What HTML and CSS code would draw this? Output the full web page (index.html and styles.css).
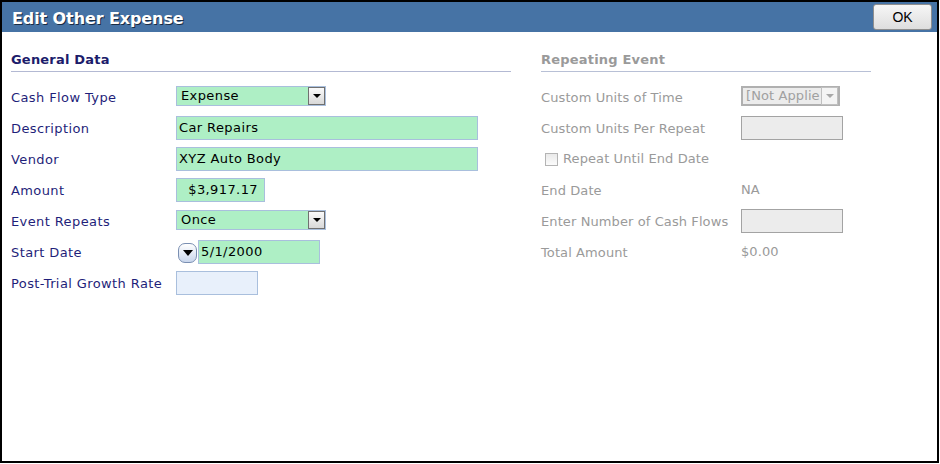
FILE: index.html
```html
<!DOCTYPE html>
<html>
<head>
<meta charset="utf-8">
<link rel="stylesheet" href="styles.css">
</head>
<body>
<div class="dialog">
  <div class="titlebar">
    <span class="title">Edit Other Expense</span>
    <button class="ok">OK</button>
  </div>
  <div class="content">
    <div class="col left">
      <div class="heading">General Data</div>
      <div class="row">
        <div class="label">Cash Flow Type</div>
        <div class="select green w150"><span class="val">Expense</span><span class="drop"><span class="tri"></span></span></div>
      </div>
      <div class="row">
        <div class="label">Description</div>
        <div class="input green w302">Car Repairs</div>
      </div>
      <div class="row">
        <div class="label">Vendor</div>
        <div class="input green w302">XYZ Auto Body</div>
      </div>
      <div class="row">
        <div class="label">Amount</div>
        <div class="input green w89 right">$3,917.17</div>
      </div>
      <div class="row">
        <div class="label">Event Repeats</div>
        <div class="select green w150"><span class="val">Once</span><span class="drop"><span class="tri"></span></span></div>
      </div>
      <div class="row">
        <div class="label">Start Date</div>
        <div class="datewrap">
          <span class="datebtn"><span class="tri"></span></span>
          <div class="input green w122 tight">5/1/2000</div>
        </div>
      </div>
      <div class="row">
        <div class="label">Post-Trial Growth Rate</div>
        <div class="input blue w82"></div>
      </div>
    </div>
    <div class="col right-col">
      <div class="heading gray">Repeating Event</div>
      <div class="row">
        <div class="label gray wide">Custom Units of Time</div>
        <div class="select disabled w99"><span class="val">[Not Applie</span><span class="drop dis"><span class="tri"></span></span></div>
      </div>
      <div class="row">
        <div class="label gray wide">Custom Units Per Repeat</div>
        <div class="input disabled w102"></div>
      </div>
      <div class="row">
        <label class="check gray"><span class="box"></span>Repeat Until End Date</label>
      </div>
      <div class="row">
        <div class="label gray wide">End Date</div>
        <div class="value gray">NA</div>
      </div>
      <div class="row">
        <div class="label gray wide">Enter Number of Cash Flows</div>
        <div class="input disabled w102"></div>
      </div>
      <div class="row">
        <div class="label gray wide">Total Amount</div>
        <div class="value gray">$0.00</div>
      </div>
    </div>
  </div>
</div>
</body>
</html>
```
FILE: styles.css
```css
html, body {
  margin: 0;
  padding: 0;
  background: #fff;
}
body {
  font-family: "DejaVu Sans", Verdana, sans-serif;
  font-size: 13px;
}
.dialog {
  width: 935px;
  height: 459px;
  border: 2px solid #000;
  background: #fff;
}
.titlebar {
  height: 30px;
  background: #4673a5;
  display: flex;
  align-items: center;
  justify-content: space-between;
  padding: 0 5px 0 10px;
}
.title {
  color: #fff;
  font-weight: bold;
  font-size: 16px;
  text-shadow: 1px 1px 0 #1a2c44;
  letter-spacing: -0.1px;
  margin-top: 2px;
}
.ok {
  width: 59px;
  height: 26px;
  border: 1px solid #8e8e8e;
  border-radius: 3px;
  background: linear-gradient(#f6f6f6, #dedede);
  font-family: "Liberation Sans", Arial, sans-serif;
  font-size: 14px;
  color: #000;
  padding: 0;
}
.content {
  display: flex;
  padding: 18px 0 0 9px;
}
.col.left {
  width: 500px;
  letter-spacing: 0.4px;
}
.col.right-col {
  width: 330px;
  margin-left: 30px;
  letter-spacing: 0.1px;
}
.heading {
  font-weight: bold;
  font-size: 13px;
  letter-spacing: 0.2px;
  color: #1c1c6b;
  height: 20px;
  padding-top: 1px;
  border-bottom: 1px solid #b3b9d3;
  line-height: 18px;
  margin-bottom: 9px;
}
.heading.gray {
  color: #9a9a9a;
  border-bottom-color: #b8c0d6;
}
.row {
  height: 31px;
  display: flex;
  align-items: center;
}
.label {
  width: 165px;
  color: #1f1f7a;
  flex: none;
  padding-top: 1px;
}
.label.wide {
  width: 200px;
}
.gray {
  color: #9a9a9a;
}
.input {
  box-sizing: border-box;
  height: 24px;
  border: 1px solid #a9bfdd;
  padding: 0 2px;
  line-height: 22px;
  color: #000;
}
.green {
  background: #aeefc5;
}
.blue {
  background: #e8f0fb;
}
.right {
  text-align: right;
  padding-right: 6px;
}
.w302 { width: 302px; }
.w150 { width: 150px; }
.w89 { width: 89px; }
.w82 { width: 82px; }
.w122 { width: 122px; }
.w99 { width: 99px; }
.w102 { width: 102px; }
.select {
  box-sizing: border-box;
  height: 20px;
  border: 1px solid #a9bfdd;
  display: flex;
  align-items: center;
  justify-content: space-between;
  padding-left: 4px;
  color: #000;
  margin-top: -1px;
}
.select .val {
  line-height: 18px;
}
.drop {
  box-sizing: border-box;
  width: 17px;
  height: 18px;
  border: 1px solid #707070;
  background: linear-gradient(#fafafa, #d8d8d8);
  display: flex;
  align-items: center;
  justify-content: center;
}
.tri {
  width: 0;
  height: 0;
  border-left: 4px solid transparent;
  border-right: 4px solid transparent;
  border-top: 4px solid #000;
}
.drop.dis {
  border-color: #c0c0c0;
  background: #f4f4f4;
}
.drop.dis .tri {
  border-top-color: #a8a8a8;
}
.select.disabled {
  background: #ececec;
  border: 2px solid #b0b0b0;
  color: #a0a0a0;
  padding-left: 3px;
}
.input.disabled {
  background: #ececec;
  border: 1px solid #a3a3a3;
}
.datewrap {
  display: flex;
  align-items: center;
}
.datebtn {
  box-sizing: border-box;
  width: 19px;
  height: 20px;
  border: 1px solid #7a8fb2;
  border-radius: 7px;
  background: linear-gradient(#ffffff, #c9d6ec);
  display: flex;
  align-items: center;
  justify-content: center;
  margin: 2px 1px 0 2px;
}
.datebtn .tri {
  border-left-width: 5px;
  border-right-width: 5px;
  border-top-width: 6px;
  margin-top: 1px;
}
.input.tight {
  padding-left: 2px;
}
.check {
  display: flex;
  align-items: center;
  padding-left: 4px;
}
.check .box {
  box-sizing: border-box;
  width: 13px;
  height: 13px;
  border: 1px solid #b4b4b4;
  background: linear-gradient(#eaeaea, #fbfbfb);
  margin-right: 5px;
  margin-top: 1px;
}
.value {
  line-height: 18px;
  padding-top: 1px;
}
```
